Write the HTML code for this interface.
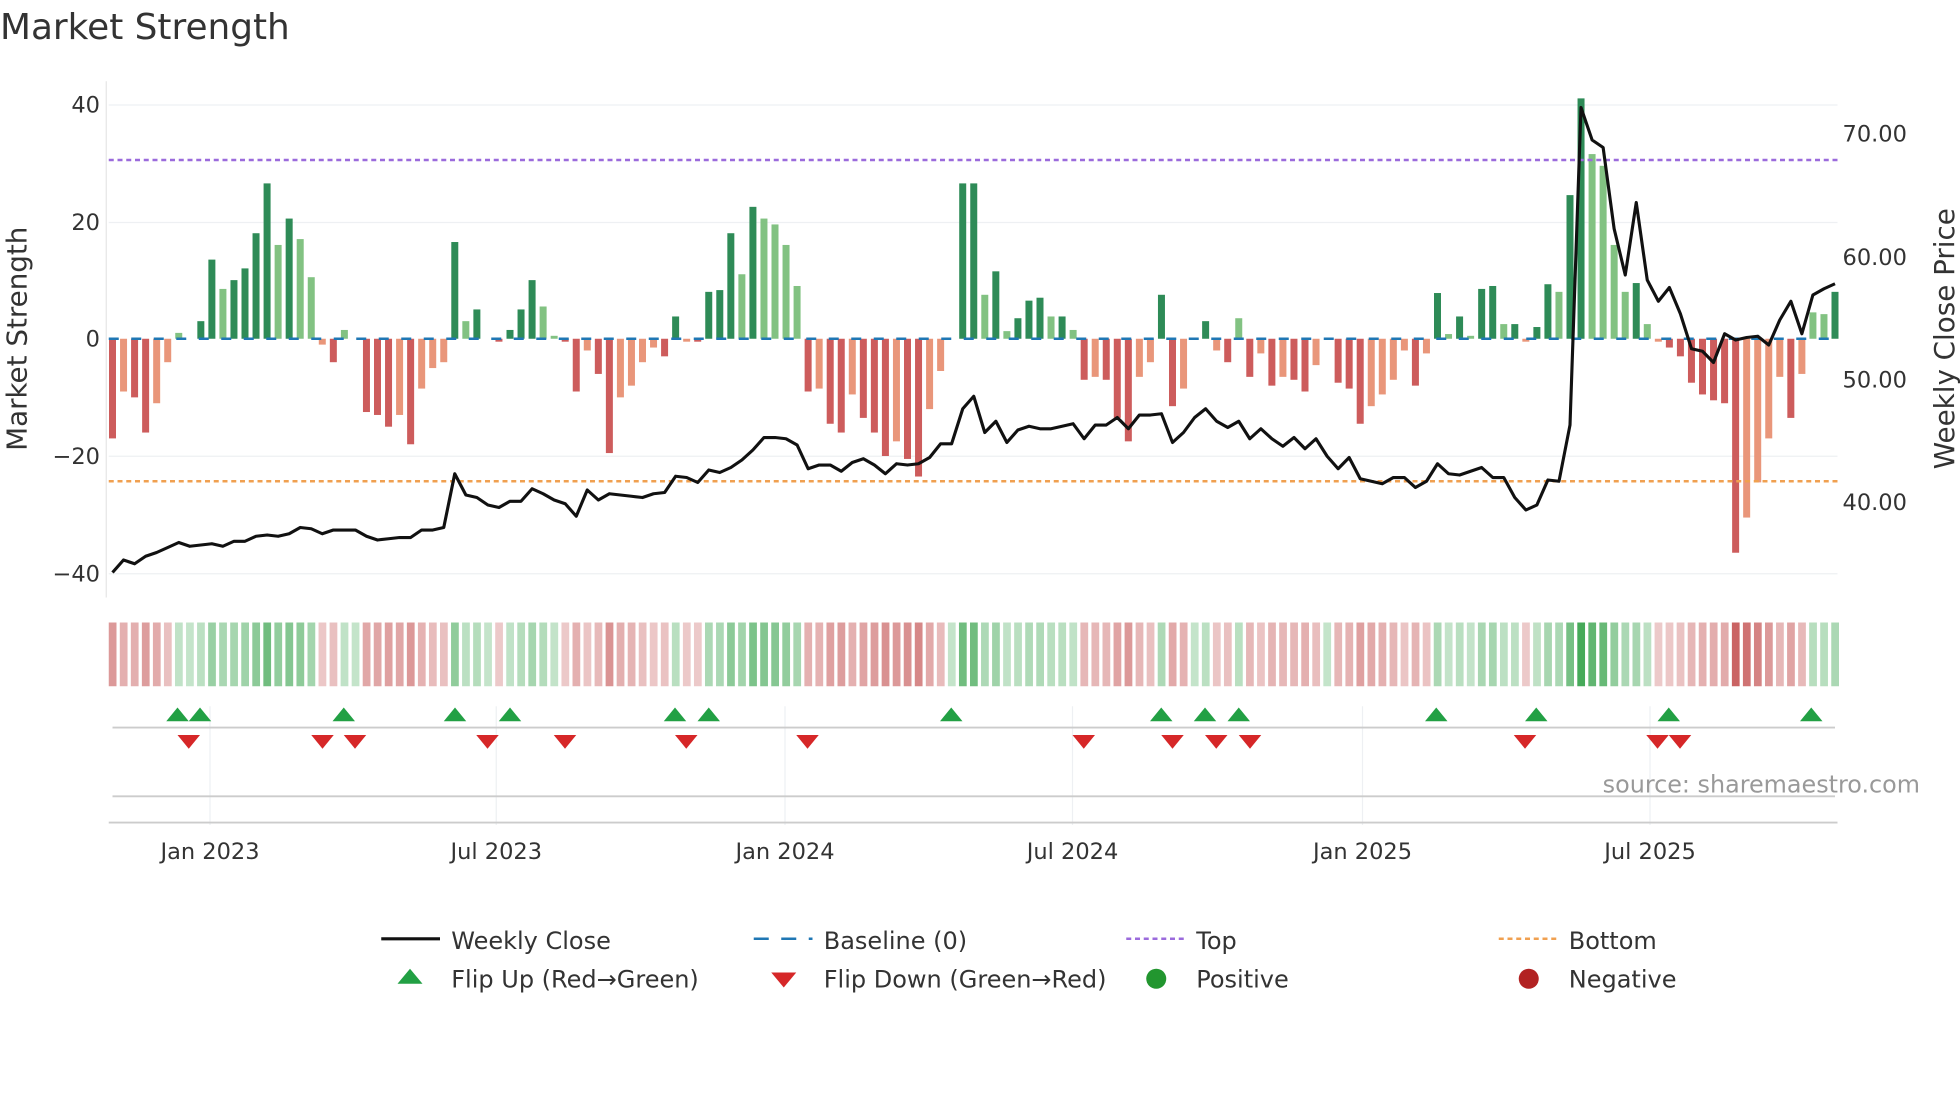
<!DOCTYPE html>
<html><head><meta charset="utf-8"><style>
html,body{margin:0;padding:0;background:#fff;}
svg{display:block;font-family:"DejaVu Sans","Liberation Sans",sans-serif;}
</style></head><body>
<svg id="c" width="1960" height="1102" viewBox="0 0 1568 881.6" xmlns="http://www.w3.org/2000/svg">
<rect width="1568" height="882" fill="#fff"/>
<text x="0" y="31" font-size="28.7" fill="#333">Market Strength</text>
<g stroke="#eef0f3" stroke-width="1">
<line x1="87" y1="84" x2="1470" y2="84"/><line x1="87" y1="178" x2="1470" y2="178"/>
<line x1="87" y1="365" x2="1470" y2="365"/><line x1="87" y1="459" x2="1470" y2="459"/>
<line x1="168" y1="565" x2="168" y2="660"/><line x1="397" y1="565" x2="397" y2="660"/>
<line x1="628" y1="565" x2="628" y2="660"/><line x1="858" y1="565" x2="858" y2="660"/>
<line x1="1090" y1="565" x2="1090" y2="660"/><line x1="1320" y1="565" x2="1320" y2="660"/>
</g>
<line x1="85" y1="65" x2="85" y2="478" stroke="#e6e6e6"/>
<g font-size="18" fill="#333" text-anchor="end">
<text x="80" y="90">40</text><text x="80" y="184">20</text><text x="80" y="277">0</text>
<text x="80" y="371">−20</text><text x="80" y="465">−40</text></g>
<g font-size="18" fill="#333">
<text x="1474" y="113">70.00</text><text x="1474" y="212">60.00</text>
<text x="1474" y="310">50.00</text><text x="1474" y="408">40.00</text></g>
<text transform="translate(21,271) rotate(-90)" font-size="22.2" fill="#333" text-anchor="middle">Market Strength</text>
<text transform="translate(1563,271) rotate(-90)" font-size="22.2" fill="#333" text-anchor="middle">Weekly Close Price</text>
<g id="bars"></g>
<line x1="87" y1="271" x2="1470" y2="271" stroke="#1f77b4" stroke-width="2" stroke-dasharray="8,10"/>
<line x1="87" y1="128" x2="1470" y2="128" stroke="#9b6bdc" stroke-width="2" stroke-dasharray="4,3"/>
<line x1="87" y1="385" x2="1470" y2="385" stroke="#f0a050" stroke-width="2" stroke-dasharray="4,3"/>
<polyline id="pl" fill="none" stroke="#111" stroke-width="2.5" stroke-linejoin="round"/>
<g id="heat"></g>
<line x1="90" y1="582" x2="1468" y2="582" stroke="#ccc" stroke-width="1.5"/>
<line x1="90" y1="637" x2="1468" y2="637" stroke="#ccc" stroke-width="1.5"/>
<line x1="87" y1="658" x2="1470" y2="658" stroke="#ccc" stroke-width="1.5"/>
<g id="marks"></g>
<text x="1536" y="634" font-size="19.1" fill="#999" text-anchor="end">source: sharemaestro.com</text>
<g font-size="18" fill="#333" text-anchor="middle">
<text x="168" y="687">Jan 2023</text><text x="397" y="687">Jul 2023</text><text x="628" y="687">Jan 2024</text>
<text x="858" y="687">Jul 2024</text><text x="1090" y="687">Jan 2025</text><text x="1320" y="687">Jul 2025</text></g>
<g font-size="19.2" fill="#333">
<line x1="305" y1="751" x2="352" y2="751" stroke="#111" stroke-width="2.5"/><text x="361" y="759">Weekly Close</text>
<line x1="603" y1="751" x2="650" y2="751" stroke="#1f77b4" stroke-width="2" stroke-dasharray="12,10"/><text x="659" y="759">Baseline (0)</text>
<line x1="901" y1="751" x2="948" y2="751" stroke="#9b6bdc" stroke-width="2" stroke-dasharray="4,3"/><text x="957" y="759">Top</text>
<line x1="1199" y1="751" x2="1246" y2="751" stroke="#f0a050" stroke-width="2" stroke-dasharray="4,3"/><text x="1255" y="759">Bottom</text>
<polygon points="328,775 338,787 318,787" fill="#22a044"/><text x="361" y="790">Flip Up (Red→Green)</text>
<polygon points="617,778 637,778 627,790" fill="#d62728"/><text x="659" y="790">Flip Down (Green→Red)</text>
<circle cx="925" cy="783" r="8" fill="#22962f"/><text x="957" y="790">Positive</text>
<circle cx="1223" cy="783" r="8" fill="#b22222"/><text x="1255" y="790">Negative</text>
</g>
</svg>
<script>
var v=[-17,-9,-10,-16,-11,-4,1,0,3,13.5,8.5,10,12,18,26.5,16,20.5,17,10.5,-1,-4,1.5,0,-12.5,-13,-15,-13,-18,-8.5,-5,-4,16.5,3,5,0,-0.5,1.5,5,10,5.5,0.5,-0.5,-9,-2,-6,-19.5,-10,-8,-4,-1.5,-3,3.8,-0.5,-0.5,8,8.3,18,11,22.5,20.5,19.5,16,9,-9,-8.5,-14.5,-16,-9.5,-13.5,-16,-20,-17.5,-20.5,-23.5,-12,-5.5,0,26.5,26.5,7.5,11.5,1.3,3.5,6.5,7,3.8,3.8,1.5,-7,-6.5,-7,-13.5,-17.5,-6.5,-4,7.5,-11.5,-8.5,0,3,-2,-4,3.5,-6.5,-2.5,-8,-6.5,-7,-9,-4.5,0,-7.5,-8.5,-14.5,-11.5,-9.5,-7,-2,-8,-2.5,7.8,0.8,3.8,0.5,8.5,9,2.5,2.5,-0.5,2,9.3,8,24.5,41,31.5,29.5,16,8,9.5,2.5,-0.5,-1.5,-3,-7.5,-9.5,-10.5,-11,-36.5,-30.5,-24.5,-17,-6.5,-13.5,-6,4.5,4.2,8];
var p=[458,448,451,445,442,438,434,437,436,435,437,433,433,429,428,429,427,422,423,427,424,424,424,429,432,431,430,430,424,424,422,379,396,398,404,406,401,401,391,395,400,403,413,392,400,395,396,397,398,395,394,381,382,386,376,378,374,368,360,350,350,351,356,375,372,372,377,370,367,372,379,371,372,371,366,355,355,327,317,346,337,354,344,341,343,343,341,339,351,340,340,334,343,332,332,331,354,346,334,327,337,342,337,351,343,351,357,350,359,351,365,375,366,383,385,387,382,382,390,385,371,379,380,377,374,382,382,398,408,404,384,385,340,86,112,118,183,220,162,224,241,230,251,279,281,290,267,272,270,269,276,256,241,267,236,231,227];
var n=v.length,x0=90,dx=(1468-90)/(n-1),s=4.69,b='',h='',pts=[];
for(var i=0;i<n;i++){var x=x0+i*dx,val=v[i],pr=i?v[i-1]:0,dark=Math.abs(val)>=Math.abs(pr);
var c=val>=0?(dark?'#2e8b57':'#82c282'):(dark?'#cd5c5c':'#e9967a');var hh=Math.abs(val)*s;
if(hh>0.3)b+='<rect x="'+(x-2.8)+'" y="'+(val>=0?271-hh:271)+'" width="5.6" height="'+hh+'" fill="'+c+'"/>';
var a=(0.3+0.65*Math.min(Math.abs(val)/40,1)).toFixed(2);
var hc=val>=0?'rgba(60,165,80,'+a+')':'rgba(195,80,80,'+a+')';
h+='<rect x="'+(x-3)+'" y="498" width="6.2" height="51" fill="'+hc+'"/>';
pts.push(x.toFixed(1)+','+p[i]);}
document.getElementById('bars').innerHTML=b;document.getElementById('heat').innerHTML=h;
document.getElementById('pl').setAttribute('points',pts.join(' '));
var up=[142,160,275,364,408,540,567,761,929,964,991,1149,1229,1335,1449],dn=[151,258,284,390,452,549,646,867,938,973,1000,1220,1326,1344],m='';
up.forEach(function(x){m+='<polygon points="'+x+',566 '+(x+9)+',577 '+(x-9)+',577" fill="#22a044"/>';});
dn.forEach(function(x){m+='<polygon points="'+(x-9)+',588 '+(x+9)+',588 '+x+',599" fill="#d62728"/>';});
document.getElementById('marks').innerHTML=m;
</script>
</body></html>
